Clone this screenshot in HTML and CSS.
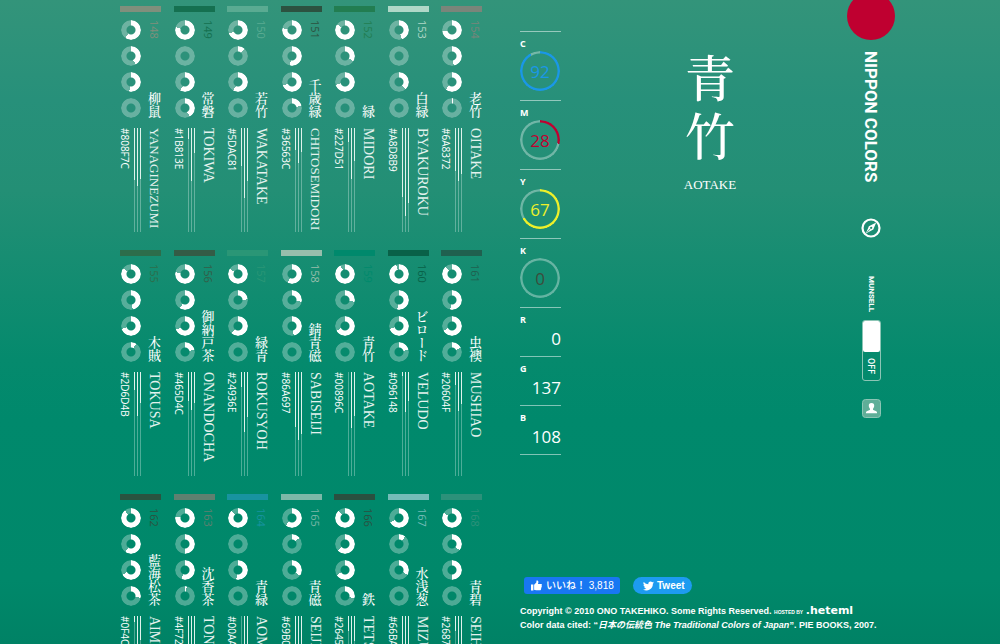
FILE: index.html
```html
<!DOCTYPE html>
<html lang="ja">
<head>
<meta charset="utf-8">
<meta name="viewport" content="width=device-width, initial-scale=1">
<title>NIPPON COLORS - 青竹 AOTAKE</title>
<link rel="stylesheet" href="styles.css">
</head>
<body>
<nav class="colors" aria-label="Colors"><ul class="swatches" id="swatches"></ul></nav>

<div class="stage">
  <main class="detail">
    <dl class="values">
      <div class="value value-ring"><dt>C</dt><dd class="dial dial-c" style="--p:92">92</dd></div>
      <div class="value value-ring"><dt>M</dt><dd class="dial dial-m" style="--p:28">28</dd></div>
      <div class="value value-ring"><dt>Y</dt><dd class="dial dial-y" style="--p:67">67</dd></div>
      <div class="value value-ring"><dt>K</dt><dd class="dial dial-k" style="--p:0">0</dd></div>
      <div class="value"><dt>R</dt><dd class="number">0</dd></div>
      <div class="value"><dt>G</dt><dd class="number">137</dd></div>
      <div class="value"><dt>B</dt><dd class="number">108</dd></div>
    </dl>

    <header class="title">
      <h2 class="title-kanji">青竹</h2>
      <p class="title-roman">AOTAKE</p>
    </header>

    <aside class="side">
      <div class="sun"></div>
      <h1 class="brand">NIPPON COLORS</h1>
      <a class="compass" href="#about" aria-label="About">
        <svg viewBox="0 0 20 20" width="20" height="20">
          <circle cx="10" cy="10" r="8.500" fill="none" stroke="#fff" stroke-width="2.200"/>
          <path fill="#fff" d="M15.200 4.500 12.300 11.400 4.800 15.500 7.900 8.300Z"/>
          <circle cx="10.200" cy="9.800" r="1.100" fill="#1b8a6e"/>
          <path d="M6 14.300 9.600 10.500" stroke="#1b8a6e" stroke-width=".8"/>
        </svg>
      </a>
      <label class="munsell" for="munsell">MUNSELL</label>
      <div class="switch">
        <input class="switch-input" type="checkbox" id="munsell">
        <span class="switch-text">OFF</span>
      </div>
      <a class="profile" href="#profile" aria-label="Profile">
        <svg viewBox="0 0 19 19" width="19" height="19">
          <rect x=".5" y=".5" width="18" height="18" rx="3" fill="#5fae98" stroke="#8cc5b5"/>
          <path fill="#fff" d="M9.500 4c1.900 0 2.900 1.300 2.700 3-.1 1.300-.6 2-1.200 2.700v1.100c.6.700 3.700.9 4 2.400v1H4v-1c.3-1.500 3.400-1.700 4-2.400V9.700C7.400 9 6.900 8.300 6.800 7c-.2-1.700.8-3 2.700-3Z"/>
        </svg>
      </a>
    </aside>
  </main>

  <footer class="footer">
    <div class="social">
      <button class="like" type="button">
        <svg viewBox="0 0 12 12" width="11" height="11"><path fill="#fff" d="M0 5h2.600v6.500H0ZM3.400 5.300 5.800 2.800 6 .6C7.500.2 8.300 1.300 8 2.700L7.600 4.300h3.200c1.200 0 1.500 1.300.6 1.800.7.500.5 1.500-.2 1.800.5.600.2 1.400-.4 1.700.3.800-.1 1.600-1.100 1.600H6c-1.100 0-1.600-.6-2.600-.7Z"/></svg>
        <span>いいね！ 3,818</span>
      </button>
      <a class="tweet" href="#tweet">
        <svg viewBox="0 0 24 20" width="11" height="10"><path fill="#fff" d="M24 2.400a10 10 0 0 1-2.800.8A5 5 0 0 0 23.300.5a10 10 0 0 1-3.100 1.200 4.900 4.900 0 0 0-8.400 4.500A14 14 0 0 1 1.700 1a4.900 4.900 0 0 0 1.500 6.600A5 5 0 0 1 1 7v.1A4.900 4.900 0 0 0 4.900 12a5 5 0 0 1-2.200.1 4.900 4.900 0 0 0 4.600 3.400A10 10 0 0 1 0 17.500 14 14 0 0 0 21.500 5Z"/></svg>
        <span>Tweet</span>
      </a>
    </div>
    <p class="legal">Copyright © 2010 ONO TAKEHIKO. Some Rights Reserved. <a class="host" href="#host"><small>HOSTED BY</small> <b>.heteml</b></a></p>
    <p class="legal">Color data cited: “<i>日本の伝統色 The Traditional Colors of Japan</i>”. PIE BOOKS, 2007.</p>
  </footer>
</div>
<script src="script.js"></script>
</body>
</html>
```

FILE: styles.css
```css
* { box-sizing: border-box; margin: 0; padding: 0; }

body {
  display: flex;
  gap: 38px;
  height: 100vh;
  padding-left: 120px;
  overflow: hidden;
  color: #fff;
  background: linear-gradient(#33947a 0, #27907a 100px, #238f75 190px, #058a6d 360px, #00896c 420px, #00886a 580px, #008265 100%);
  font-family: "Open Sans", "Noto Sans CJK JP", sans-serif;
}

a { color: inherit; text-decoration: none; }

/* Colour list */
.colors { flex: none; padding-top: 6px; }

.swatches {
  display: grid;
  grid-template-columns: repeat(7, 41px);
  justify-content: space-between;
  row-gap: 18px;
  width: 362px;
  list-style: none;
}

.swatch { display: block; }
.swatch-bar { height: 6px; background: var(--color); }
.swatch-top { display: flex; justify-content: space-between; margin-top: 8px; }
.rings { display: grid; gap: 6px; margin-left: 1px; }

.ring {
  width: 20px;
  height: 20px;
  border-radius: 50%;
  background: conic-gradient(#fff calc(var(--p) * 1%), rgba(255, 255, 255, .3) 0);
  -webkit-mask: radial-gradient(circle, transparent 4px, #000 5px);
  mask: radial-gradient(circle, transparent 4px, #000 5px);
}

.swatch-label {
  display: flex;
  flex-direction: column;
  justify-content: space-between;
  align-items: center;
  width: 14px;
}

.swatch-number, .swatch-kanji, .swatch-hex, .swatch-name, .brand, .munsell, .switch-text {
  writing-mode: vertical-rl;
  white-space: nowrap;
}

.swatch-number { color: var(--color); font: 11px/14px "Open Sans", sans-serif; }
.swatch-kanji { font: 500 13px/14px "Noto Serif CJK JP", "Noto Sans CJK JP", serif; }

.swatch-bottom { display: flex; height: 104px; margin-top: 10px; }
.swatch-hex { width: 10px; font: 10px/10px "Open Sans", sans-serif; }
.lines { display: flex; gap: 2px; margin-left: 4px; }
.line { width: 1px; background: linear-gradient(#e0f2ec calc(var(--v) / 255 * 100%), rgba(255, 255, 255, .3) 0); }
.swatch-name { margin-left: 6px; width: 14px; font: 14px/14px "Liberation Serif", serif; color: #e4f2ee; }
.swatch-name.long { font-size: 13px; }

/* Selected colour */
.stage { display: flex; flex: 1; flex-direction: column; justify-content: space-between; min-width: 0; }
.detail { display: grid; grid-template-columns: 41px 1fr 48px; padding-right: 105px; }

.values { margin-top: 31px; border-bottom: 1px solid rgba(255, 255, 255, .5); }
.value { height: 49px; padding-top: 6px; border-top: 1px solid rgba(255, 255, 255, .5); }
.value-ring { height: 69px; }
.value dt { font-size: 9px; font-weight: 700; line-height: 11px; }
.number { margin-top: 2px; font-size: 17px; line-height: 24px; text-align: right; }

.dial {
  position: relative;
  display: grid;
  place-items: center;
  width: 40px;
  height: 40px;
  margin-top: 2px;
  font-size: 17px;
}
.dial::before {
  content: "";
  position: absolute;
  inset: 0;
  border-radius: 50%;
  background: conic-gradient(currentColor calc(var(--p) * 1%), rgba(255, 255, 255, .35) 0);
  -webkit-mask: radial-gradient(circle, transparent 17px, #000 18px);
  mask: radial-gradient(circle, transparent 17px, #000 18px);
}
.dial-c { color: #1a97e8; }
.dial-m { color: #c00030; }
.dial-y { color: #eef02a; }
.dial-k { color: #3c4c3c; }

.title { padding: 46px 0 0 12px; text-align: center; }
.title-kanji {
  width: 50px;
  margin: 0 auto;
  font: 500 50px/58px "Noto Serif CJK JP", "Noto Sans CJK JP", serif;
  overflow-wrap: anywhere;
}
.title-roman { margin-top: 15px; font: 13px/16px "Liberation Serif", serif; }

.side { display: flex; flex-direction: column; align-items: center; }
.sun { width: 48px; height: 48px; margin-top: -8px; border-radius: 50%; background: #bf0030; }
.brand { margin-top: 11px; height: 132px; font: 700 17px/20px Roboto, sans-serif; }
.compass { margin-top: 35px; height: 20px; }
.munsell { margin-top: 38px; height: 37px; font: 700 8px/12px Roboto, sans-serif; }
.switch {
  display: flex;
  flex-direction: column;
  align-items: center;
  gap: 6px;
  width: 19px;
  height: 61px;
  margin-top: 7px;
  border: 1px solid #8cc5b5;
  border-radius: 3px;
}
.switch-input { appearance: none; width: 17px; height: 31px; border-radius: 2px; background: #fff; }
.switch-text { font: 500 9px/12px Roboto, sans-serif; }
.profile { margin-top: 18px; height: 19px; }

/* Footer */
.footer { padding-bottom: 12px; }
.social { display: flex; gap: 13px; margin: 0 0 11px 4px; }
.like, .tweet {
  display: flex;
  align-items: center;
  height: 17px;
  border: 0;
  color: #fff;
  font: 700 10px/17px "Liberation Sans", "Noto Sans CJK JP", sans-serif;
  white-space: nowrap;
}
.like { gap: 4px; width: 96px; padding-left: 7px; border-radius: 3px; background: #1877f2; font-weight: 500; }
.tweet { gap: 3px; width: 59px; padding-left: 10px; border-radius: 9px; background: #1d9bf0; }
.legal { font: 700 9px/13px "Liberation Sans", "Noto Sans CJK JP", sans-serif; white-space: nowrap; }
.host small { font-size: 5px; }
.host b { font: 700 11px/11px "DejaVu Sans", sans-serif; }
```

FILE: script.js
```javascript
// number, kanji, romanised name, hex, [C, M, Y, K], display tone where it differs from the hex
const colors = [
  [148, "柳鼠", "YANAGINEZUMI", "808F7C", [60, 42, 53, 0]],
  [149, "常磐", "TOKIWA", "1B813E", [80, 0, 58, 42], "157050"],
  [150, "若竹", "WAKATAKE", "5DAC81", [69, 12, 58, 0], "5AAB92"],
  [151, "千歳緑", "CHITOSEMIDORI", "36563C", [78, 54, 69, 21], "2C5240"],
  [152, "緑", "MIDORI", "227D51", [85, 34, 70, 0]],
  [153, "白緑", "BYAKUROKU", "A8D8B9", [45, 0, 38, 0], "B0D8C8"],
  [154, "老竹", "OITAKE", "6A8372", [73, 47, 61, 2], "7A857A"],
  [155, "木賊", "TOKUSA", "2D6D4B", [85, 47, 70, 9]],
  [156, "御納戸茶", "ONANDOCHA", "465D4C", [78, 59, 69, 21], "345C46"],
  [157, "緑青", "ROKUSYOH", "24936E", [84, 24, 62, 0], "2A9676"],
  [158, "錆青磁", "SABISEIJI", "86A697", [57, 28, 47, 0], "98BEAC"],
  [159, "青竹", "AOTAKE", "00896C", [92, 28, 67, 0]],
  [160, "ビロード", "VELUDO", "096148", [95, 53, 70, 21]],
  [161, "虫襖", "MUSHIAO", "20604F", [88, 53, 67, 18]],
  [162, "藍海松茶", "AIMIRUCHA", "0F4C3A", [89, 60, 67, 28], "2A5340"],
  [163, "沈香茶", "TONOCHA", "4F726C", [77, 50, 56, 3], "5F8070"],
  [164, "青緑", "AOMIDORI", "00AA90", [88, 0, 53, 0], "1893A0"],
  [165, "青磁", "SEIJI", "69B0AC", [61, 14, 35, 0], "7CB8A8"],
  [166, "鉄", "TETSUIRO", "26453D", [88, 63, 66, 29], "2A5040"],
  [167, "水浅葱", "MIZUASAGI", "66BAB7", [68, 11, 33, 0], "74BCB8"],
  [168, "青碧", "SEIHEKI", "268785", [84, 36, 50, 0], "2C917A"]
];

const channels = hex => [0, 2, 4].map(i => parseInt(hex.slice(i, i + 2), 16));

document.getElementById("swatches").innerHTML = colors.map(([number, kanji, name, hex, cmyk, tone = hex]) => `
  <li><a class="swatch" href="#${name.toLowerCase()}" style="--color:#${tone}">
    <div class="swatch-bar"></div>
    <div class="swatch-top">
      <div class="rings">${cmyk.map(p => `<div class="ring" style="--p:${p}"></div>`).join("")}</div>
      <div class="swatch-label"><span class="swatch-number">${number}</span><span class="swatch-kanji">${kanji}</span></div>
    </div>
    <div class="swatch-bottom">
      <span class="swatch-hex">#${hex}</span>
      <div class="lines">${channels(hex).map(v => `<div class="line" style="--v:${v}"></div>`).join("")}</div>
      <span class="swatch-name${name.length > 10 ? " long" : ""}">${name}</span>
    </div>
  </a></li>`).join("");
```
